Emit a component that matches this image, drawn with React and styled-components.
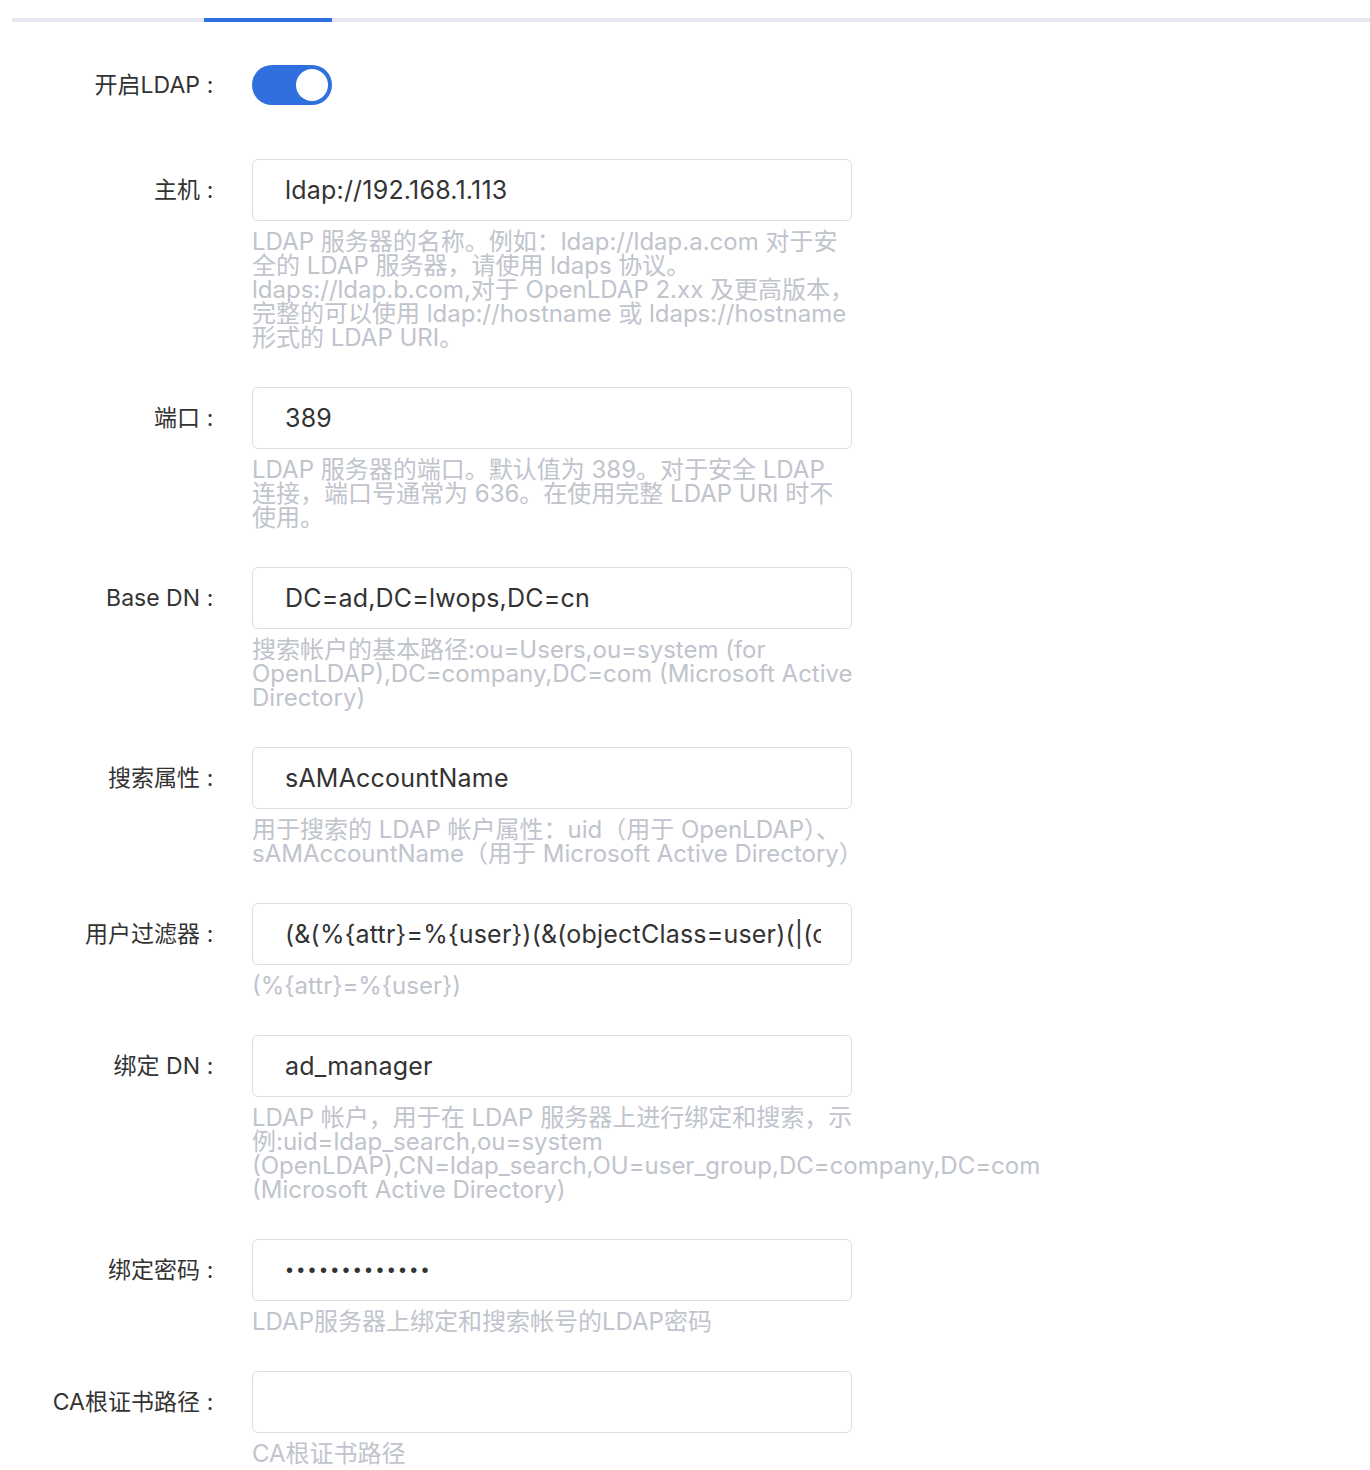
import React from 'react';
import styled, { createGlobalStyle } from 'styled-components';

const GlobalStyle = createGlobalStyle`
  body {
    margin: 0;
    background: #fff;
    font-family: Inter, "Noto Sans CJK SC", sans-serif;
  }
`;

const Page = styled.div`
  width: 1370px;
  padding-bottom: 40px;
`;

const TabBar = styled.div`
  display: flex;
  margin-left: 12px;
  padding-top: 18px;
  border-bottom: 4px solid #e4e7ed;
`;

const TabInk = styled.div`
  margin-left: ${({ offset }) => offset}px;
  width: ${({ size }) => size}px;
  height: 4px;
  margin-bottom: -4px;
  background: #2f6fde;
`;

const Form = styled.form`
  display: flex;
  flex-direction: column;
  padding-top: 43px;
`;

const Item = styled.div`
  display: flex;
  align-items: flex-start;
  margin-bottom: ${({ gap }) => gap}px;
`;

const Label = styled.label`
  flex: 0 0 220px;
  height: ${({ tall }) => (tall ? 62 : 40)}px;
  line-height: ${({ tall }) => (tall ? 62 : 40)}px;
  text-align: right;
  font-size: 23px;
  color: #333;
  margin-right: 32px;
  white-space: nowrap;
`;

const Colon = styled.span`
  display: inline-block;
  width: 20px;
  text-align: center;
`;

const Field = styled.div`
  display: flex;
  flex-direction: column;
  width: 600px;
`;

const Input = styled.input`
  box-sizing: border-box;
  width: 600px;
  height: 62px;
  padding: 0 30px 0 32px;
  border: 1px solid #dcdfe6;
  border-radius: 6px;
  font-family: Inter, "Noto Sans CJK SC", sans-serif;
  font-size: 25px;
  letter-spacing: 0.2px;
  color: #333;
  background: #fff;
  outline: none;

  &[type='password'] {
    padding-left: 33px;
    font-family: "Liberation Sans", sans-serif;
    font-size: 20px;
    letter-spacing: 4.3px;
  }
`;

const Help = styled.div`
  margin-top: 9px;
  font-size: 24px;
  line-height: 24px;
  color: #c0c4cc;
  white-space: nowrap;
`;

const Switch = styled.button`
  position: relative;
  width: 80px;
  height: 40px;
  padding: 0;
  border: none;
  border-radius: 20px;
  background: ${({ on }) => (on ? '#2f6fde' : '#dcdfe6')};
  cursor: pointer;

  &::after {
    content: '';
    position: absolute;
    top: 4px;
    left: ${({ on }) => (on ? '44px' : '4px')};
    width: 32px;
    height: 32px;
    border-radius: 50%;
    background: #fff;
  }
`;

const fields = [
  {
    label: '主机',
    value: 'ldap://192.168.1.113',
    help: [
      'LDAP 服务器的名称。例如：ldap://ldap.a.com 对于安',
      '全的 LDAP 服务器，请使用 ldaps 协议。',
      'ldaps://ldap.b.com,对于 OpenLDAP 2.xx 及更高版本，',
      '完整的可以使用 ldap://hostname 或 ldaps://hostname',
      '形式的 LDAP URI。',
    ],
  },
  {
    label: '端口',
    value: '389',
    help: [
      'LDAP 服务器的端口。默认值为 389。对于安全 LDAP',
      '连接，端口号通常为 636。在使用完整 LDAP URI 时不',
      '使用。',
    ],
  },
  {
    label: 'Base DN',
    value: 'DC=ad,DC=lwops,DC=cn',
    help: [
      '搜索帐户的基本路径:ou=Users,ou=system (for',
      'OpenLDAP),DC=company,DC=com (Microsoft Active',
      'Directory)',
    ],
  },
  {
    label: '搜索属性',
    value: 'sAMAccountName',
    help: [
      '用于搜索的 LDAP 帐户属性：uid（用于 OpenLDAP）、',
      'sAMAccountName（用于 Microsoft Active Directory）',
    ],
  },
  {
    label: '用户过滤器',
    value: '(&(%{attr}=%{user})(&(objectClass=user)(|(objectCategory=person))))',
    help: ['(%{attr}=%{user})'],
  },
  {
    label: '绑定 DN',
    value: 'ad_manager',
    help: [
      'LDAP 帐户，用于在 LDAP 服务器上进行绑定和搜索，示',
      '例:uid=ldap_search,ou=system',
      '(OpenLDAP),CN=ldap_search,OU=user_group,DC=company,DC=com',
      '(Microsoft Active Directory)',
    ],
  },
  {
    label: '绑定密码',
    value: 'passwordabcd1',
    type: 'password',
    help: ['LDAP服务器上绑定和搜索帐号的LDAP密码'],
  },
  {
    label: 'CA根证书路径',
    value: '',
    help: ['CA根证书路径'],
  },
];

const App = () => {
  return (
    <>
      <GlobalStyle />
      <Page>
        <TabBar>
          <TabInk offset={192} size={128} />
        </TabBar>
        <Form onSubmit={(e) => e.preventDefault()}>
          <Item gap={54}>
            <Label>
              开启LDAP<Colon>:</Colon>
            </Label>
            <Switch type="button" on />
          </Item>
          {fields.map((f) => (
            <Item gap={37} key={f.label}>
              <Label tall>
                {f.label}
                <Colon>:</Colon>
              </Label>
              <Field>
                <Input type={f.type || 'text'} value={f.value} readOnly />
                <Help>
                  {f.help.map((line, i) => (
                    <div key={i}>{line}</div>
                  ))}
                </Help>
              </Field>
            </Item>
          ))}
        </Form>
      </Page>
    </>
  );
};

export default App;
